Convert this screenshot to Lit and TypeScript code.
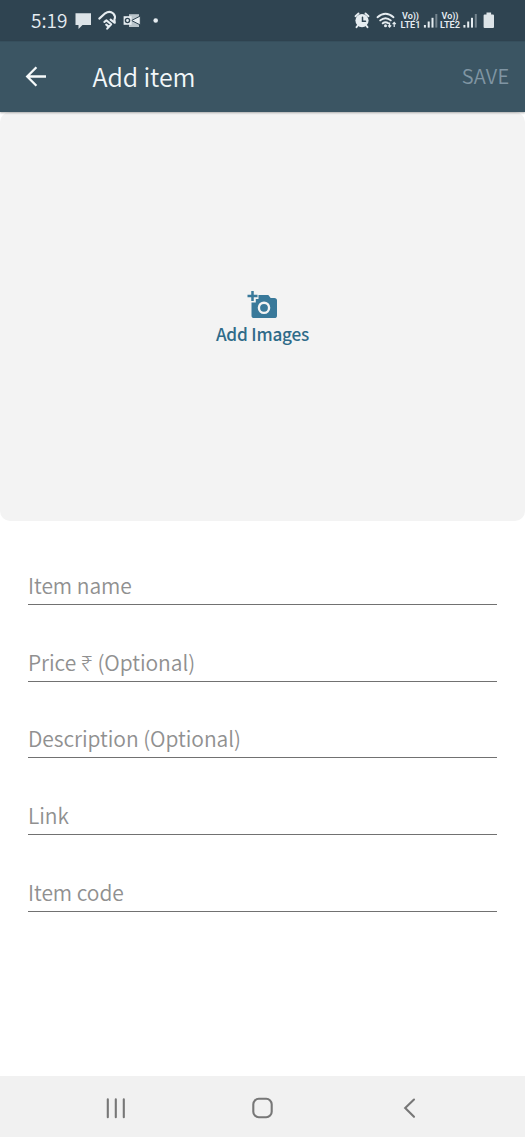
import { LitElement, html, css, svg } from "lit";
import { customElement, property } from "lit/decorators.js";

@customElement("status-bar")
class StatusBar extends LitElement {
  static styles = css`
    :host { display: block; height: 41px; background: #2f4451; color: #e6edf1; }
    svg { display: block; }
    text { font-family: "Noto Sans CJK SC", "Noto Sans", sans-serif; fill: #e6edf1; }
    .clock { font-size: 19.5px; font-weight: 350; }
    .tag { font-family: Roboto, "Noto Sans", sans-serif; font-size: 8.6px; font-weight: 600; }
  `;
  private signal(x: number, label: string) {
    return svg`
      <text class="tag" x=${x + 1.5} y="19.4" textLength="17" lengthAdjust="spacingAndGlyphs">Vo))</text>
      <text class="tag" x=${x} y="28" textLength="20" lengthAdjust="spacingAndGlyphs">${label}</text>
      <g fill="#e6edf1">
        <rect x=${x + 23.4} y="25" width="2" height="2.6" />
        <rect x=${x + 27.2} y="21.5" width="2" height="6.1" />
        <rect x=${x + 31} y="17.8" width="2" height="9.8" />
        <rect x=${x + 34.8} y="14" width="2" height="13.6" opacity=".38" />
      </g>`;
  }
  render() {
    return html`<svg width="525" height="41" viewBox="0 0 525 41">
      <text class="clock" x="31" y="28" textLength="36.5" lengthAdjust="spacingAndGlyphs">5:19</text>
      <path fill="#dde4e8" d="M75.500 13.300h15.500v11.800H82.500l-4 4v-4h-3z" />
      <g fill="none" stroke="#e6edf1" stroke-width="2.100" stroke-linecap="round" stroke-linejoin="round">
        <path d="M99.300 18.600L105.200 13.300Q109.500 10.300 113.300 13.500Q116 16.500 114.400 19.500L114.800 22.800L110.600 19.600" />
        <path d="M104.400 21.800L106.400 20.400L111.200 24.200L107.200 28.600M106.200 24.600L108.600 26.600" />
      </g>
      <rect x="129" y="14.200" width="10" height="12.800" fill="#b9c4ca" />
      <path d="M131.500 20.500l8.800-4.500v9z" fill="#e6edf1" stroke="#2f4451" stroke-width="1" />
      <rect x="123.600" y="16.200" width="8" height="8.600" fill="#e6edf1" />
      <circle cx="127.500" cy="20.500" r="2.100" fill="none" stroke="#2f4451" stroke-width="1.400" />
      <circle cx="155.700" cy="20.500" r="2.300" fill="#e6edf1" />
      <g stroke="#e6edf1" stroke-linecap="round">
        <circle cx="362" cy="20.600" r="6.600" fill="#e6edf1" stroke="none" />
        <path d="M355.500 16.200l3-2.700M368.500 16.200l-3-2.700M357.800 25.500l-1.300 1.700M366.200 25.500l1.300 1.700" stroke-width="1.900" />
        <path d="M362.500 17.200v4.100h3" fill="none" stroke="#2f4451" stroke-width="1.500" />
      </g>
      <g fill="none" stroke="#e6edf1" stroke-width="1.900" stroke-linecap="round">
        <path d="M377.500 17.200Q385.500 10.200 393.500 17.200" />
        <path d="M380.200 20.400Q385.500 15.900 390.800 20.400" />
        <path d="M382.700 23.300Q385.500 21.100 388.300 23.300" />
      </g>
      <circle cx="385.500" cy="25.800" r="1.500" fill="#e6edf1" />
      <path d="M389.600 22.500v4.300m-1.600-1.500l1.600 1.700 1.600-1.700M394.200 27v-4.300m-1.600 1.500l1.600-1.700 1.600 1.700" fill="none" stroke="#e6edf1" stroke-width="1.200" />
      ${this.signal(400.5, "LTE1")} ${this.signal(440, "LTE2")}
      <path fill="#dde4e8" d="M486.500 12.600h4.600v1.800h1.900q1 0 1 1v11.600q0 1-1 1h-8.400q-1 0-1-1v-11.600q0-1 1-1h1.900z" />
    </svg>`;
  }
}

@customElement("form-field")
class FormField extends LitElement {
  @property() label = "";
  static styles = css`
    :host {
      display: flex; align-items: flex-end; box-sizing: border-box; height: 76.75px;
      border-bottom: 1.4px solid #717171; padding: 0 0 3px;
      font: 350 21px/32px "Noto Sans CJK SC", "Noto Sans", sans-serif; color: #909090;
    }
    span { white-space: pre; letter-spacing: -.05px; }
  `;
  render() {
    return html`<span>${this.label}</span>`;
  }
}

@customElement("app-root")
class AppRoot extends LitElement {
  static styles = css`
    :host {
      display: flex; flex-direction: column; width: 525px; height: 1137px; overflow: hidden;
      background: #fff; font-family: "Noto Sans CJK SC", "Noto Sans", sans-serif;
    }
    .bar {
      height: 71px; box-sizing: border-box; display: flex; align-items: center; padding: 0 15.5px 0 24px;
      background: #3b5563; color: #f2f7f9; box-shadow: 0 1px 2px rgba(0, 0, 0, .3); z-index: 1;
      border-top: 1px solid #364f5d; flex: none;
    }
    .bar svg { margin-right: 44.5px; }
    .title { font-size: 25px; line-height: 36px; flex: 1; font-weight: 350; padding-bottom: 2px; letter-spacing: -.1px; }
    .save { font-size: 20px; line-height: 30px; font-weight: 350; color: #8095a3; padding-bottom: 2px; letter-spacing: .3px; }
    .photos {
      height: 409px; flex: none; background: #f3f3f3; border-radius: 10px;
      display: flex; flex-direction: column; align-items: center; box-sizing: border-box; padding-top: 178px;
    }
    .photos svg { display: block; }
    .add { font-size: 17.2px; line-height: 24px; font-weight: 500; color: #2f6b89; letter-spacing: -.2px; }
    .form { flex: 1; padding: 7px 28px 0; }
    .nav { height: 61px; flex: none; background: #f1f1f1; }
    .nav svg { display: block; }
  `;
  render() {
    return html`
      <status-bar></status-bar>
      <header class="bar">
        <svg width="24" height="24" viewBox="0 0 24 24" fill="none" stroke="#f6fafb" stroke-width="2.300">
          <path d="M22 11.500H3.500M12.400 2.200L3.200 11.500l9.200 9.300" />
        </svg>
        <span class="title">Add item</span>
        <span class="save">SAVE</span>
      </header>
      <section class="photos">
        <svg width="32" height="32" viewBox="0 0 32 32">
          <path fill="#39799a" d="M11.500 5h9.800l2.400 2.900h3.600q2.700 0 2.700 2.700v14.800q0 2.700-2.700 2.700H7.200q-2.700 0-2.700-2.700V12.500h4.300V9h2.700z" />
          <circle cx="17" cy="17.800" r="5.100" fill="none" stroke="#f3f3f3" stroke-width="2.400" />
          <path d="M5.500 1v10M.5 6h10" stroke="#39799a" stroke-width="2.500" />
        </svg>
        <span class="add">Add Images</span>
      </section>
      <main class="form">
        <form-field label="Item name"></form-field>
        <form-field label="Price ₹ (Optional)"></form-field>
        <form-field label="Description (Optional)"></form-field>
        <form-field label="Link"></form-field>
        <form-field label="Item code"></form-field>
      </main>
      <nav class="nav">
        <svg width="525" height="61" viewBox="0 0 525 61" fill="none" stroke="#777" stroke-width="2.100" stroke-linecap="round">
          <path d="M107.800 23.200v18M115.800 23.200v18M123.800 23.200v18" />
          <rect x="253.300" y="22.800" width="18.400" height="18.400" rx="5.500" />
          <path d="M414 23.500l-8.800 8.500 8.800 8.800" />
        </svg>
      </nav>`;
  }
}
